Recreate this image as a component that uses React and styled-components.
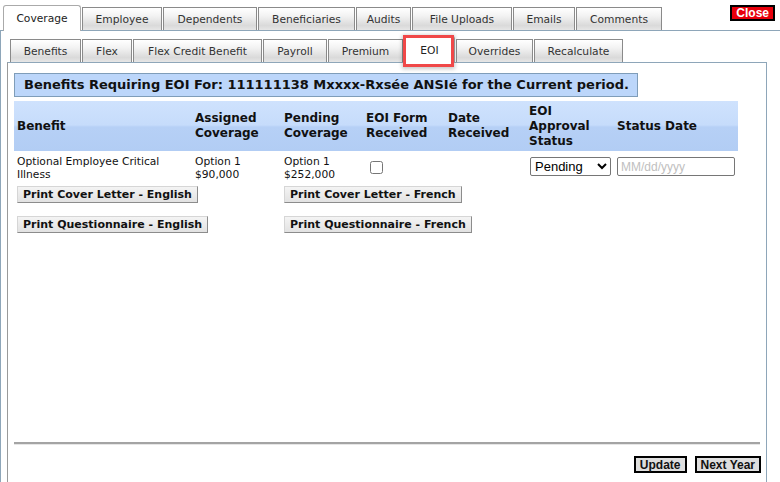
import React from "react";
import styled, { createGlobalStyle } from "styled-components";

const GlobalStyle = createGlobalStyle`
  html, body {
    margin: 0;
    padding: 0;
    background: #fff;
    font-family: "DejaVu Sans", Verdana, sans-serif;
    overflow: hidden;
  }
`;

const Page = styled.div`
  width: 780px;
  height: 482px;
  padding-top: 5px;
  box-sizing: border-box;
`;

const TabBar = styled.div`
  display: flex;
  align-items: flex-end;
  padding-left: ${p => p.indent}px;
  position: relative;
  z-index: 1;
`;

const Tab = styled.div`
  box-sizing: border-box;
  width: ${p => p.width}px;
  height: ${p => (p.active ? p.activeHeight : p.height)}px;
  margin-right: 1px;
  margin-bottom: ${p => (p.active ? -1 : 0)}px;
  display: flex;
  align-items: center;
  justify-content: center;
  font-size: 10.7px;
  color: ${p => (p.active ? "#222" : "#333")};
  border: 1px solid ${p => (p.active ? "#aaa" : "#8a8a8a")};
  border-bottom: 0;
  border-radius: ${p => (p.active ? "3px 3px 0 0" : "0")};
  background: ${p =>
    p.active
      ? "#fff"
      : "linear-gradient(#ffffff, #f3f3f3 35%, #dadada 80%, #e6e6e6)"};
  white-space: nowrap;
  position: relative;

  ${p =>
    p.marked &&
    `
    &::after {
      content: "";
      position: absolute;
      left: -2px;
      right: 0;
      top: -2px;
      bottom: -4px;
      border: 3px solid #f04848;
      box-shadow: 0 1px 4px 1px rgba(0,0,0,0.22);
      pointer-events: none;
    }
  `}
`;

const CloseButton = styled.button`
  align-self: flex-start;
  margin-left: auto;
  margin-right: 5px;
  height: 16px;
  padding: 0 4px;
  border: 2px solid #000;
  background: #e8000b;
  color: #fff;
  font-family: "Liberation Sans", Arial, sans-serif;
  font-weight: bold;
  font-size: 12px;
  line-height: 11px;
`;

const OuterPanel = styled.div`
  border-top: 1px solid #8ea6b9;
  border-left: 1px solid #8ea6b9;
  height: 460px;
  box-sizing: border-box;
`;

const InnerWrap = styled.div`
  margin: 5px 0 0 6px;
  width: 760px;
`;

const InnerPanel = styled.div`
  border-top: 1px solid #8ea6b9;
  border-right: 1px solid #8ea6b9;
  border-left: 1px solid #9a9a9a;
  padding: 10px 6px 0;
  box-sizing: border-box;
  height: 430px;
  display: flex;
  flex-direction: column;
`;

const Title = styled.div`
  align-self: flex-start;
  height: 24px;
  box-sizing: border-box;
  padding: 0 8px 0 9px;
  border: 1px solid #7f9db9;
  background: #bcd6fa;
  font-weight: bold;
  font-size: 13px;
  line-height: 22px;
  color: #111;
  white-space: nowrap;
`;

const Grid = styled.div`
  width: 724px;
  display: grid;
  grid-template-columns: 178px 89px 82px 82px 81px 88px 1fr;
`;

const HeadRow = styled(Grid)`
  margin-top: 4px;
  height: 50px;
  align-items: center;
  background: linear-gradient(#cfe2fd, #c6dcfb 48%, #b6d0f6 52%, #b2cdf4);
`;

const HeadCell = styled.div`
  padding-left: 3px;
  font-weight: bold;
  font-size: 12px;
  line-height: 15px;
  color: #111;
`;

const DataRow = styled(Grid)`
  padding-top: 4px;
  height: 35px;
  box-sizing: border-box;
`;

const Cell = styled.div`
  padding-left: 3px;
  font-size: 10.7px;
  line-height: 13px;
  color: #111;
`;

const Check = styled.input`
  width: 13px;
  height: 13px;
  margin: 6px 0 0 4px;
`;

const Select = styled.select`
  width: 81px;
  height: 19px;
  margin: 2px 0 0 1px;
  padding: 0;
  font-family: "Liberation Sans", Arial, sans-serif;
  font-size: 13px;
  border: 1px solid #767676;
  border-radius: 2px;
  background: #fff;
  color: #000;
`;

const DateInput = styled.input`
  width: 118px;
  height: 19px;
  margin: 2px 0 0 0;
  padding: 0 3px;
  box-sizing: border-box;
  font-family: "Liberation Sans", Arial, sans-serif;
  font-size: 12px;
  border: 1px solid #767676;
  border-radius: 2px;
  &::placeholder {
    color: #c0c0c0;
  }
`;

const ButtonRow = styled(Grid)`
  margin-top: ${p => p.gap}px;
`;

const PrintButton = styled.button`
  grid-column: ${p => p.col};
  justify-self: start;
  margin-left: 3px;
  height: 17px;
  padding: 0 5px;
  font-family: "DejaVu Sans", Verdana, sans-serif;
  font-weight: bold;
  font-size: 11px;
  line-height: 14px;
  color: #111;
  background: linear-gradient(#f4f4f4, #e2e2e2);
  border: 1px solid;
  border-color: #d6d6d6 #8c8c8c #8c8c8c #d6d6d6;
  border-radius: 0;
  white-space: nowrap;
`;

const Footer = styled.div`
  margin-top: auto;
  padding-bottom: 19px;
`;

const Rule = styled.div`
  border-top: 2px solid #a4a4a4;
  border-bottom: 1px solid #e6e6e6;
  box-sizing: border-box;
  height: 3px;
`;

const Actions = styled.div`
  display: flex;
  justify-content: flex-end;
  gap: 8px;
  margin-top: 11px;
  margin-right: -1px;
`;

const ActionButton = styled.button`
  height: 17px;
  padding: 0 4px;
  border: 2px solid #000;
  background: #dedede;
  font-family: "Liberation Sans", Arial, sans-serif;
  font-weight: bold;
  font-size: 12px;
  line-height: 12px;
  color: #111;
`;

const outerTabs = [
  ["Coverage", 78],
  ["Employee", 80],
  ["Dependents", 94],
  ["Beneficiaries", 97],
  ["Audits", 55],
  ["File Uploads", 100],
  ["Emails", 62],
  ["Comments", 86]
];

const subTabs = [
  ["Benefits", 71],
  ["Flex", 50],
  ["Flex Credit Benefit", 129],
  ["Payroll", 64],
  ["Premium", 75],
  ["EOI", 51],
  ["Overrides", 77],
  ["Recalculate", 89]
];

const headers = [
  ["Benefit"],
  ["Assigned", "Coverage"],
  ["Pending", "Coverage"],
  ["EOI Form", "Received"],
  ["Date", "Received"],
  ["EOI", "Approval", "Status"],
  ["Status Date"]
];

export default function App() {
  return (
    <Page>
      <GlobalStyle />
      <TabBar indent={3}>
        {outerTabs.map(([t, w]) => (
          <Tab
            key={t}
            width={w}
            active={t === "Coverage"}
            height={23}
            activeHeight={26}
          >
            {t}
          </Tab>
        ))}
        <CloseButton>Close</CloseButton>
      </TabBar>
      <OuterPanel>
        <InnerWrap>
          <TabBar indent={3}>
            {subTabs.map(([t, w]) => (
              <Tab
                key={t}
                width={w}
                active={t === "EOI"}
                marked={t === "EOI"}
                height={23}
                activeHeight={27}
              >
                {t}
              </Tab>
            ))}
          </TabBar>
          <InnerPanel>
            <Title>
              Benefits Requiring EOI For: 111111138 Mxxxx-Rxsée ANSIé for the
              Current period.
            </Title>
            <HeadRow>
              {headers.map(lines => (
                <HeadCell key={lines.join(" ")}>
                  {lines.map(line => (
                    <div key={line}>{line}</div>
                  ))}
                </HeadCell>
              ))}
            </HeadRow>
            <DataRow>
              <Cell>
                Optional Employee Critical
                <br />
                Illness
              </Cell>
              <Cell>
                Option 1
                <br />
                $90,000
              </Cell>
              <Cell>
                Option 1
                <br />
                $252,000
              </Cell>
              <Cell>
                <Check type="checkbox" />
              </Cell>
              <Cell />
              <Cell>
                <Select defaultValue="Pending">
                  <option>Pending</option>
                  <option>Approved</option>
                  <option>Declined</option>
                </Select>
              </Cell>
              <Cell>
                <DateInput placeholder="MM/dd/yyyy" />
              </Cell>
            </DataRow>
            <ButtonRow gap={0}>
              <PrintButton col="1 / 3">Print Cover Letter - English</PrintButton>
              <PrintButton col="3 / 6">Print Cover Letter - French</PrintButton>
            </ButtonRow>
            <ButtonRow gap={13}>
              <PrintButton col="1 / 3">Print Questionnaire - English</PrintButton>
              <PrintButton col="3 / 6">Print Questionnaire - French</PrintButton>
            </ButtonRow>
            <Footer>
              <Rule />
              <Actions>
                <ActionButton>Update</ActionButton>
                <ActionButton>Next Year</ActionButton>
              </Actions>
            </Footer>
          </InnerPanel>
        </InnerWrap>
      </OuterPanel>
    </Page>
  );
}
